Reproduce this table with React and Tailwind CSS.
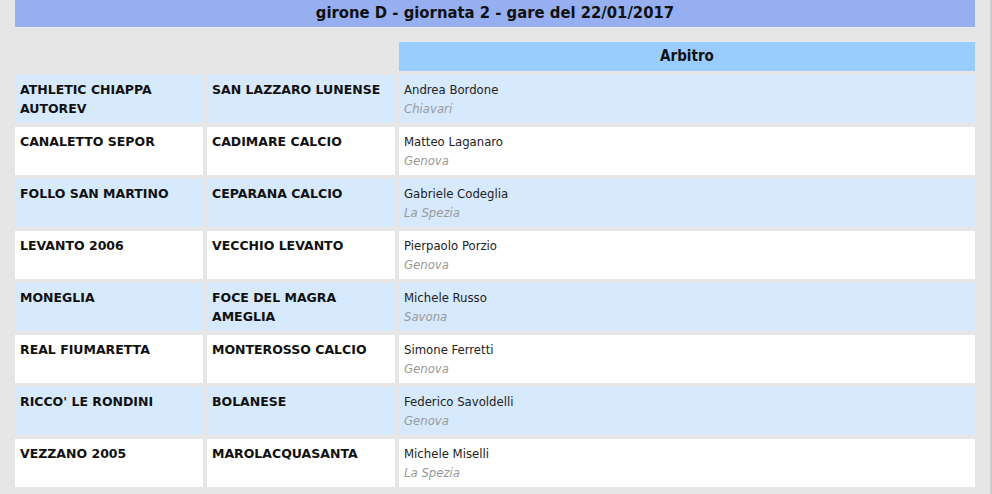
import React from "react";

const matches = [
  { home: "ATHLETIC CHIAPPA AUTOREV", away: "SAN LAZZARO LUNENSE", ref: "Andrea Bordone", city: "Chiavari" },
  { home: "CANALETTO SEPOR", away: "CADIMARE CALCIO", ref: "Matteo Laganaro", city: "Genova" },
  { home: "FOLLO SAN MARTINO", away: "CEPARANA CALCIO", ref: "Gabriele Codeglia", city: "La Spezia" },
  { home: "LEVANTO 2006", away: "VECCHIO LEVANTO", ref: "Pierpaolo Porzio", city: "Genova" },
  { home: "MONEGLIA", away: "FOCE DEL MAGRA AMEGLIA", ref: "Michele Russo", city: "Savona" },
  { home: "REAL FIUMARETTA", away: "MONTEROSSO CALCIO", ref: "Simone Ferretti", city: "Genova" },
  { home: "RICCO' LE RONDINI", away: "BOLANESE", ref: "Federico Savoldelli", city: "Genova" },
  { home: "VEZZANO 2005", away: "MAROLACQUASANTA", ref: "Michele Miselli", city: "La Spezia" },
];

const App = () => {
  return (
    <div className="flex min-h-screen w-full bg-[#e6e6e6]">
      <div className="flex-1 px-[15px]">
        <div className="h-[27px] bg-[#95aff0] flex items-center justify-center text-[16.5px] font-bold text-[#111] font-['DejaVu_Sans_Condensed','DejaVu_Sans',sans-serif]">
          girone D - giornata 2 - gare del 22/01/2017
        </div>
        <div className="mt-[15px] grid grid-cols-[188px_188px_1fr] gap-[4px]">
          <div></div>
          <div></div>
          <div className="h-[29px] bg-[#99ccff] flex items-center justify-center text-[15px] font-bold text-[#111] font-['DejaVu_Sans_Condensed','DejaVu_Sans',sans-serif]">
            Arbitro
          </div>
          {matches.map((m, index) => {
            const bg = index % 2 === 0 ? "bg-[#d7e9fd]" : "bg-white";
            return (
              <React.Fragment key={index}>
                <div className={`${bg} h-[48px] px-[5px] py-[5px] text-[12.5px] leading-[19px] font-bold text-[#111] font-['DejaVu_Sans',sans-serif]`}>
                  {m.home}
                </div>
                <div className={`${bg} h-[48px] px-[5px] py-[5px] text-[12.5px] leading-[19px] font-bold text-[#111] font-['DejaVu_Sans',sans-serif]`}>
                  {m.away}
                </div>
                <div className={`${bg} h-[48px] px-[5px] py-[5px] text-[13px] leading-[19px] font-['DejaVu_Sans_Condensed','DejaVu_Sans',sans-serif]`}>
                  <div className="text-[#222]">{m.ref}</div>
                  <div className="italic text-[#999]">{m.city}</div>
                </div>
              </React.Fragment>
            );
          })}
        </div>
      </div>
      <div className="w-[2px] bg-[#cdcdcd]"></div>
    </div>
  );
};

export default App;
